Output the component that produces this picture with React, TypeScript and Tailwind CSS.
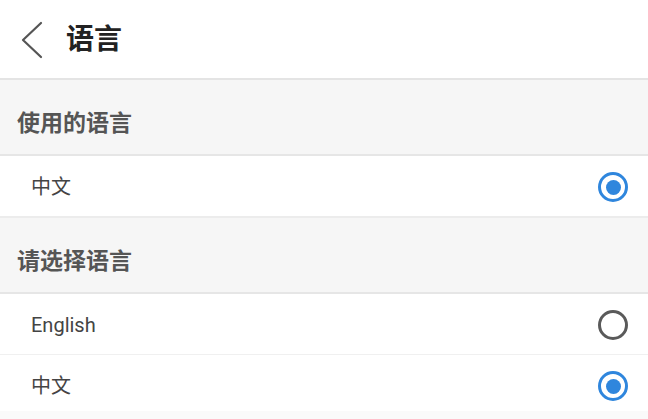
const cjk = "font-['Roboto','Noto_Sans_CJK_SC',sans-serif]"

function Radio({ checked }: { checked: boolean }) {
  if (checked) {
    return (
      <span className="flex h-[30px] w-[30px] items-center justify-center rounded-full border-[3px] border-[#2f86dd]">
        <span className="h-[15px] w-[15px] rounded-full bg-[#2f86dd]" />
      </span>
    )
  }
  return <span className="block h-[30px] w-[30px] rounded-full border-[3px] border-[#5a5a5a]" />
}

function Section({ title }: { title: string }) {
  return (
    <div className="flex h-[76px] items-center border-b-2 border-[#e6e6e6] bg-[#f6f6f6] px-[17px] pt-[14px]">
      <span className="text-[23px] font-bold text-[#555]">{title}</span>
    </div>
  )
}

function Row({ label, checked, border = 'border-b-2 border-[#ececec]', h = 'h-[62px]', pt = 'pt-[2px]' }: { label: string; checked: boolean; border?: string; h?: string; pt?: string }) {
  return (
    <div className={`flex ${h} items-center justify-between bg-white pl-[31px] pr-[20px] ${pt} ${border}`}>
      <span className="text-[20px] text-[#444]">{label}</span>
      <Radio checked={checked} />
    </div>
  )
}

export default function App() {
  return (
    <div className={`h-[419px] w-[648px] overflow-hidden bg-[#fafafa] ${cjk}`}>
      <header className="flex h-[80px] items-center gap-[22px] border-b-2 border-[#e4e4e4] bg-white pl-[18px] pt-[2px]">
        <svg width="26" height="38" viewBox="0 0 26 38" fill="none">
          <path d="M23 2 L5 19 L23 36" stroke="#555" strokeWidth="2.2" strokeLinecap="round" strokeLinejoin="round" />
        </svg>
        <h1 className="text-[28px] font-bold text-[#222]">语言</h1>
      </header>

      <Section title="使用的语言" />
      <Row label="中文" checked />

      <Section title="请选择语言" />
      <Row label="English" checked={false} border="border-b border-[#f0f0f0]" h="h-[61px]" />
      <Row label="中文" checked border="" h="h-[56px]" pt="pt-[6px]" />
    </div>
  )
}
